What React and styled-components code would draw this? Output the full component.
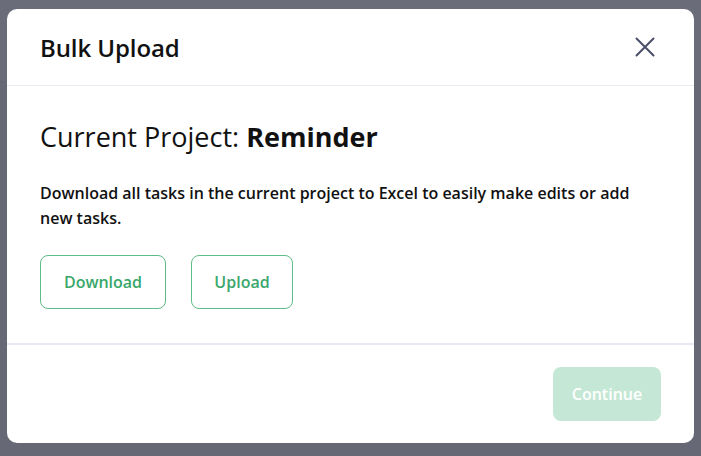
import React from "react";
import styled, { createGlobalStyle } from "styled-components";

const Global = createGlobalStyle`
  html, body { margin: 0; padding: 0; }
  body {
    background: #666875;
    font-family: "Open Sans", "Liberation Sans", sans-serif;
    -webkit-font-smoothing: antialiased;
  }
`;

const Backdrop = styled.div`
  width: 701px;
  height: 456px;
  box-sizing: border-box;
  padding: 9px 7px 13px 7px;
  background: linear-gradient(#6a6c79 0, #6a6c79 80px, #636570 81px, #666875 82px);
`;

const Modal = styled.div`
  width: 687px;
  height: 434px;
  background: #fff;
  border-radius: 10px;
  display: flex;
  flex-direction: column;
  overflow: hidden;
`;

const Header = styled.div`
  height: 77px;
  box-sizing: border-box;
  padding: 0 38px 0 33px;
  display: flex;
  align-items: center;
  justify-content: space-between;
  border-bottom: 1px solid #e7eaf0;
`;

const Title = styled.h2`
  margin: 0;
  font-size: 24px;
  font-weight: 600;
  color: #111;
  letter-spacing: -0.1px;
`;

const CloseButton = styled.button`
  border: 0;
  background: none;
  padding: 0;
  width: 22px;
  height: 22px;
  display: flex;
  align-items: center;
  justify-content: center;
  cursor: pointer;
`;

const Body = styled.div`
  flex: 1;
  padding: 34px 33px 0;
  border-bottom: 2px solid #e8e8f3;
`;

const Project = styled.div`
  font-size: 27px;
  font-weight: 400;
  color: #111;
  line-height: 34px;
  b { font-weight: 700; }
`;

const Description = styled.p`
  margin: 27px 0 0;
  font-size: 16px;
  font-weight: 600;
  line-height: 25px;
  color: #111;
  max-width: 600px;
`;

const Actions = styled.div`
  display: flex;
  gap: 25px;
  margin-top: 24px;
`;

const OutlineButton = styled.button`
  height: 54px;
  width: ${(p) => p.$w}px;
  border: 1px solid #5ebd88;
  border-radius: 8px;
  background: #fff;
  color: #39a76a;
  font-family: inherit;
  font-size: 16px;
  font-weight: 600;
  cursor: pointer;
`;

const Footer = styled.div`
  height: 98px;
  box-sizing: border-box;
  padding: 22px 33px 22px 0;
  display: flex;
  justify-content: flex-end;
  align-items: flex-start;
`;

const PrimaryButton = styled.button`
  width: 108px;
  height: 54px;
  border: 0;
  border-radius: 8px;
  background: #c5e7d5;
  color: #fff;
  font-family: inherit;
  font-size: 16px;
  font-weight: 600;
`;

export default function App() {
  return (
    <>
      <Global />
      <Backdrop>
        <Modal>
          <Header>
            <Title>Bulk Upload</Title>
            <CloseButton aria-label="Close">
              <svg width="20" height="20" viewBox="0 0 20 20">
                <path d="M1.5 1.5 L18.5 18.5 M18.5 1.5 L1.5 18.5" stroke="#4a4e69" strokeWidth="2" strokeLinecap="round" fill="none" />
              </svg>
            </CloseButton>
          </Header>
          <Body>
            <Project>
              Current Project: <b>Reminder</b>
            </Project>
            <Description>
              Download all tasks in the current project to Excel to easily make edits or add new tasks.
            </Description>
            <Actions>
              <OutlineButton $w={126}>Download</OutlineButton>
              <OutlineButton $w={102}>Upload</OutlineButton>
            </Actions>
          </Body>
          <Footer>
            <PrimaryButton disabled>Continue</PrimaryButton>
          </Footer>
        </Modal>
      </Backdrop>
    </>
  );
}
